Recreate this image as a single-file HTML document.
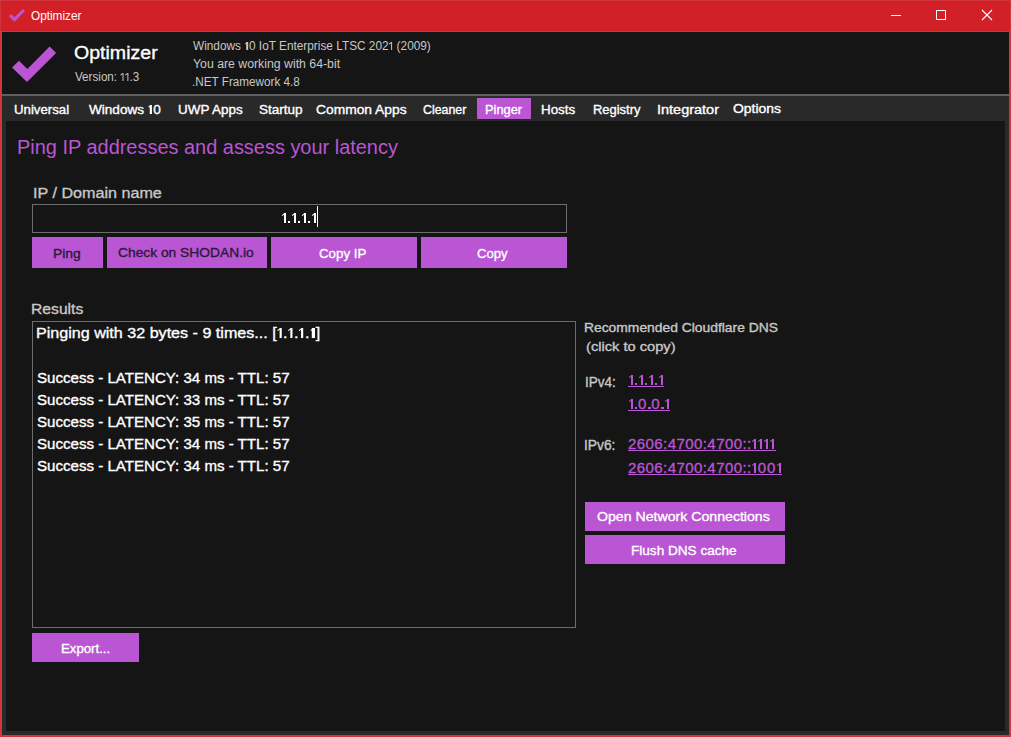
<!DOCTYPE html>
<html><head><meta charset="utf-8">
<style>
html,body{margin:0;padding:0;}
body{width:1011px;height:737px;overflow:hidden;position:relative;background:#d12027;font-family:"Liberation Sans",sans-serif;}
.a{position:absolute;}
.t{position:absolute;white-space:nowrap;line-height:1;transform-origin:0 0;}
.sb{-webkit-text-stroke:0.35px currentColor;}
.btn{position:absolute;background:#ba55d3;}
.o1{display:inline-block;position:relative;width:0.4em;height:0.7em;}
.o1::before{content:"";position:absolute;left:0.18em;bottom:0;width:0.14em;height:0.7em;background:currentColor;}
.o1::after{content:"";position:absolute;left:-0.02em;top:0.0em;width:0.24em;height:0.09em;background:currentColor;transform:rotate(-38deg);transform-origin:100% 0;}
.dt{display:inline-block;position:relative;width:0.267em;height:0.7em;}
.dt::before{content:"";position:absolute;left:0.04em;bottom:0;width:0.18em;height:0.16em;background:currentColor;}
.o1.rg::before{width:0.135em;left:0.18em;}
.o1.rg::after{height:0.075em;}
</style></head><body>
<!-- frame -->
<div class="a" style="left:0;top:0;width:1011px;height:1px;background:#d3353d;"></div>
<div class="a" style="left:0;top:0;width:1px;height:737px;background:#d3353d;"></div>
<div class="a" style="left:1010px;top:0;width:1px;height:737px;background:#d3353d;"></div>
<div class="a" style="left:0;top:736px;width:1011px;height:1px;background:#d3353d;"></div>
<div class="a" style="left:1px;top:31px;width:1009px;height:705px;background:#5f6868;"></div>
<div class="a" style="left:2px;top:32px;width:1007px;height:703px;background:#292929;"></div>
<!-- header -->
<div class="a" style="left:2px;top:32px;width:1007px;height:62px;background:#151515;"></div>
<div class="a" style="left:2px;top:94px;width:1007px;height:2px;background:#5e5e5e;"></div>
<!-- content panel -->
<div class="a" style="left:6px;top:121px;width:999px;height:610px;background:#151515;"></div>

<!-- title bar -->
<svg class="a" style="left:0;top:0" width="30" height="30" viewBox="0 0 30 30"><polygon points="8.8,16.2 11.0,14.0 14.5,17.3 22.8,8.9 25.1,11.0 14.5,21.8" fill="#ba55d3"/></svg>
<svg class="a" style="left:880px;top:0" width="131" height="31" viewBox="880 0 131 31">
<line x1="891" y1="15.5" x2="901" y2="15.5" stroke="#fff" stroke-width="1"/>
<rect x="936.5" y="10.5" width="9" height="9" fill="none" stroke="#fff" stroke-width="1"/>
<path d="M982 10 L992 20 M992 10 L982 20" stroke="#fff" stroke-width="1.1"/>
</svg>

<!-- header content -->
<svg class="a" style="left:0;top:32px" width="70" height="62" viewBox="0 32 70 62"><polygon points="12,67.5 19,60.7 27.4,68.9 49.6,46.5 56.1,52.9 27,82.1" fill="#ba55d3"/></svg>

<!-- tabs -->
<div class="btn" style="left:477px;top:98px;width:54px;height:21px;"></div>

<!-- content boxes -->
<div class="a" style="left:32px;top:204px;width:533px;height:27px;border:1px solid #6c6c6c;background:#151515;"></div>
<div class="a" style="left:317px;top:206px;width:1px;height:21px;background:#fff;"></div>
<div class="btn" style="left:32px;top:237px;width:71px;height:31px;"></div>
<div class="btn" style="left:107px;top:237px;width:160px;height:31px;"></div>
<div class="btn" style="left:271px;top:237px;width:146px;height:31px;"></div>
<div class="btn" style="left:421px;top:237px;width:146px;height:31px;"></div>
<div class="a" style="left:32px;top:321px;width:542px;height:305px;border:1px solid #6c6c6c;background:#151515;"></div>
<div class="btn" style="left:32px;top:633px;width:107px;height:29px;"></div>
<div class="btn" style="left:585px;top:502px;width:200px;height:29px;"></div>
<div class="btn" style="left:585px;top:535px;width:200px;height:29px;"></div>

<!-- special texts -->
<div class="t sb" style="left:281px;top:210px;font-size:15px;color:#fff;"><i class="o1"></i><i class="dt"></i><i class="o1"></i><i class="dt"></i><i class="o1"></i><i class="dt"></i><i class="o1"></i></div>
<div class="t sb" style="left:628px;top:372px;font-size:15px;color:#ba55d3;"><i class="o1"></i><i class="dt"></i><i class="o1"></i><i class="dt"></i><i class="o1"></i><i class="dt"></i><i class="o1"></i></div>
<div class="t sb" style="left:628px;top:396px;font-size:15px;color:#ba55d3;"><i class="o1"></i><i class="dt"></i><span style="letter-spacing:0.9px">0</span><i class="dt"></i><span style="letter-spacing:0.9px">0</span><i class="dt"></i><i class="o1"></i></div>
<div class="t sb" style="left:628px;top:436px;font-size:15px;color:#ba55d3;"><span style="letter-spacing:0.43px">2606:4700:4700::</span><i class="o1"></i><i class="o1"></i><i class="o1"></i><i class="o1"></i></div>
<div class="t sb" style="left:628px;top:460px;font-size:15px;color:#ba55d3;"><span style="letter-spacing:0.43px">2606:4700:4700::</span><i class="o1"></i><span style="letter-spacing:0.9px">00</span><i class="o1"></i></div>
<div class="a" style="left:628px;top:386px;width:36px;height:1px;background:#ba55d3;"></div>
<div class="a" style="left:628px;top:410px;width:42px;height:1px;background:#ba55d3;"></div>
<div class="a" style="left:628px;top:450px;width:148px;height:1px;background:#ba55d3;"></div>
<div class="a" style="left:628px;top:474px;width:154px;height:1px;background:#ba55d3;"></div>
<div class="t" style="left:31.10px;top:10px;font-size:12px;color:#fff;transform:scaleX(0.9808);">Optimizer</div>
<div class="t sb" style="left:74.46px;top:44px;font-size:18px;color:#fff;transform:scaleX(1.0861);">Optimizer</div>
<div class="t" style="left:74.59px;top:71px;font-size:12px;color:#c8c8c8;transform:scaleX(0.9703);">Version: <i class="o1 rg"></i><i class="o1 rg"></i>.3</div>
<div class="t" style="left:192.58px;top:40px;font-size:12px;color:#c8c8c8;transform:scaleX(0.9856);">Windows <i class="o1 rg"></i>0 IoT Enterprise LTSC 202<i class="o1 rg"></i> (2009)</div>
<div class="t" style="left:192.58px;top:58px;font-size:12px;color:#c8c8c8;transform:scaleX(1.0239);">You are working with 64-bit</div>
<div class="t" style="left:191.62px;top:76px;font-size:12px;color:#c8c8c8;transform:scaleX(0.9766);">.NET Framework 4.8</div>
<div class="t sb" style="left:13.55px;top:104px;font-size:12.5px;color:#fff;transform:scaleX(1.0577);">Universal</div>
<div class="t sb" style="left:88.60px;top:104px;font-size:12.5px;color:#fff;transform:scaleX(1.0851);">Windows <i class="o1"></i>0</div>
<div class="t sb" style="left:178.30px;top:104px;font-size:12.5px;color:#fff;transform:scaleX(1.0754);">UWP Apps</div>
<div class="t sb" style="left:258.62px;top:104px;font-size:12.5px;color:#fff;transform:scaleX(1.0826);">Startup</div>
<div class="t sb" style="left:315.92px;top:104px;font-size:12.5px;color:#fff;transform:scaleX(1.1047);">Common Apps</div>
<div class="t sb" style="left:422.89px;top:104px;font-size:12.5px;color:#fff;transform:scaleX(0.9885);">Cleaner</div>
<div class="t sb" style="left:484.78px;top:104px;font-size:12.5px;color:#fff;transform:scaleX(1.0277);">Pinger</div>
<div class="t sb" style="left:541.31px;top:104px;font-size:12.5px;color:#fff;transform:scaleX(1.0691);">Hosts</div>
<div class="t sb" style="left:593.00px;top:104px;font-size:12.5px;color:#fff;transform:scaleX(1.0350);">Registry</div>
<div class="t sb" style="left:657.15px;top:104px;font-size:12.5px;color:#fff;transform:scaleX(1.1578);">Integrator</div>
<div class="t sb" style="left:733.00px;top:103px;font-size:12.5px;color:#fff;transform:scaleX(1.1130);">Options</div>
<div class="t" style="left:17.00px;top:137px;font-size:20px;color:#ba55d3;transform:scaleX(0.9969);">Ping IP addresses and assess your latency</div>
<div class="t sb" style="left:32.65px;top:185px;font-size:15.5px;color:#c8c8c8;transform:scaleX(1.0408);">IP / Domain name</div>
<div class="t sb" style="left:52.77px;top:247px;font-size:13.5px;color:#2a1a3a;transform:scaleX(1.0284);">Ping</div>
<div class="t sb" style="left:118.48px;top:246px;font-size:13.5px;color:#2a1a3a;transform:scaleX(1.0219);">Check on SHODAN.io</div>
<div class="t sb" style="left:319.49px;top:247px;font-size:13.5px;color:#fff;transform:scaleX(0.9854);">Copy IP</div>
<div class="t sb" style="left:477.21px;top:247px;font-size:13.5px;color:#fff;transform:scaleX(0.9724);">Copy</div>
<div class="t sb" style="left:30.95px;top:301px;font-size:15px;color:#c8c8c8;transform:scaleX(1.0453);">Results</div>
<div class="t sb" style="left:35.61px;top:325px;font-size:15px;color:#fff;transform:scaleX(1.0731);">Pinging with 32 bytes - 9 times... [<i class="o1"></i>.<i class="o1"></i>.<i class="o1"></i>.<i class="o1"></i>]</div>
<div class="t sb" style="left:36.80px;top:370px;font-size:15px;color:#fff;transform:scaleX(1.0056);">Success - LATENCY: 34 ms - TTL: 57</div>
<div class="t sb" style="left:36.80px;top:392px;font-size:15px;color:#fff;transform:scaleX(1.0056);">Success - LATENCY: 33 ms - TTL: 57</div>
<div class="t sb" style="left:36.80px;top:414px;font-size:15px;color:#fff;transform:scaleX(1.0056);">Success - LATENCY: 35 ms - TTL: 57</div>
<div class="t sb" style="left:36.80px;top:436px;font-size:15px;color:#fff;transform:scaleX(1.0056);">Success - LATENCY: 34 ms - TTL: 57</div>
<div class="t sb" style="left:36.80px;top:458px;font-size:15px;color:#fff;transform:scaleX(1.0056);">Success - LATENCY: 34 ms - TTL: 57</div>
<div class="t sb" style="left:60.57px;top:642px;font-size:13.5px;color:#fff;transform:scaleX(0.9779);">Export...</div>
<div class="t sb" style="left:584.39px;top:321px;font-size:13px;color:#c8c8c8;transform:scaleX(1.0649);">Recommended Cloudflare DNS</div>
<div class="t sb" style="left:586.06px;top:340px;font-size:13px;color:#c8c8c8;transform:scaleX(1.1266);">(click to copy)</div>
<div class="t sb" style="left:585.06px;top:375px;font-size:14px;color:#c8c8c8;transform:scaleX(0.9641);">IPv4:</div>
<div class="t sb" style="left:584.32px;top:438px;font-size:14px;color:#c8c8c8;transform:scaleX(0.9830);">IPv6:</div>
<div class="t sb" style="left:596.92px;top:510px;font-size:13.5px;color:#fff;transform:scaleX(1.0467);">Open Network Connections</div>
<div class="t sb" style="left:630.87px;top:544px;font-size:13.5px;color:#fff;transform:scaleX(1.0055);">Flush DNS cache</div>
</body></html>
